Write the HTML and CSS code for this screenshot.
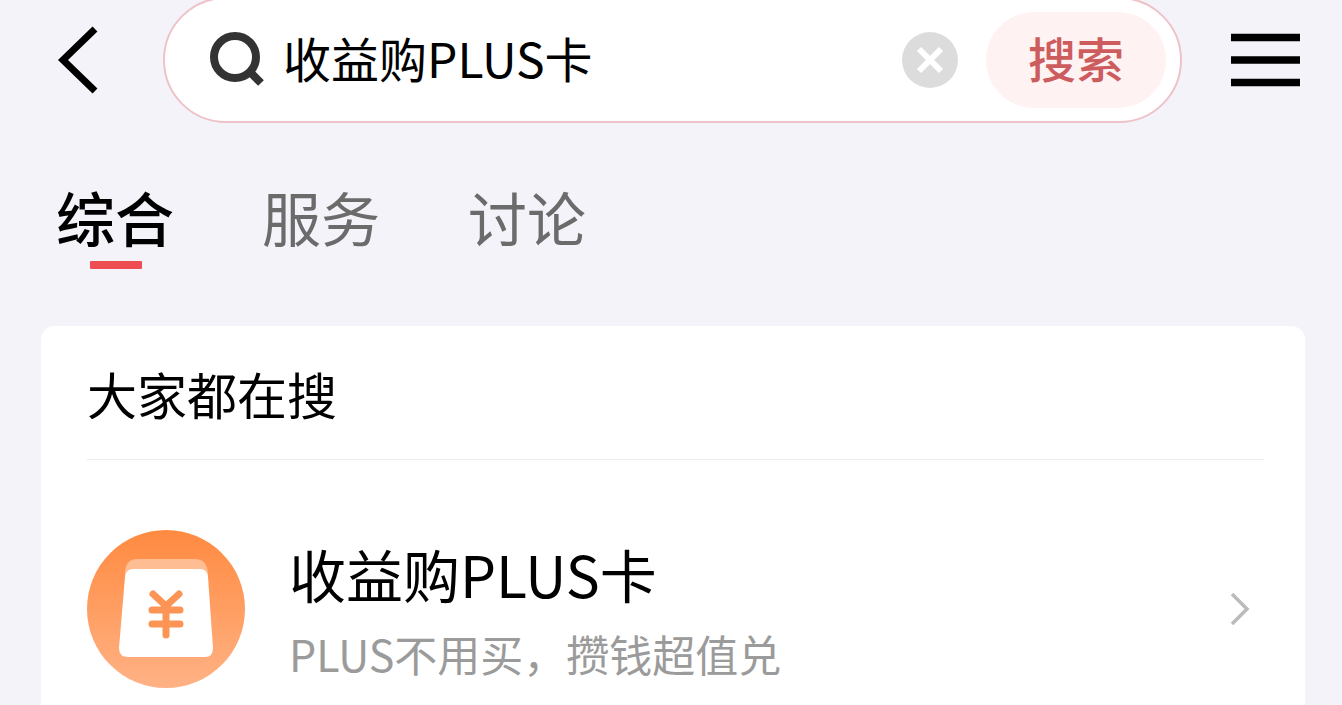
FILE: index.html
```html
<!DOCTYPE html>
<html lang="zh-CN">
<head>
    <meta charset="UTF-8">
    <meta name="viewport" content="width=device-width, initial-scale=1.0">
    <title>收益购PLUS卡</title>
    <link rel="stylesheet" href="styles.css">
</head>
<body>

    <header class="header">
        <button class="icon-btn back" type="button" aria-label="返回">
            <svg width="42" height="70" viewBox="0 0 42 70">
                <path d="M39 4 L7 35 L39 66" fill="none" stroke="#000" stroke-width="7"/>
            </svg>
        </button>
        <form class="search" role="search">
            <svg class="search-icon" width="56" height="56" viewBox="0 0 56 56" fill="none" stroke="#333">
                <circle cx="26" cy="25" r="21" stroke-width="8"/>
                <path d="M40 39 L52 51" stroke-width="8"/>
            </svg>
            <input class="search-input" type="text" value="收益购PLUS卡" aria-label="搜索内容">
            <button class="icon-btn clear" type="reset" aria-label="清空">
                <svg width="56" height="56" viewBox="0 0 56 56">
                    <circle cx="28" cy="28" r="28" fill="#dcdcdc"/>
                    <path d="M17 17 L39 39 M39 17 L17 39" stroke="#fff" stroke-width="6"/>
                </svg>
            </button>
            <button class="search-btn" type="button">搜索</button>
        </form>
        <button class="icon-btn menu" type="button" aria-label="菜单">
            <svg width="69" height="54" viewBox="0 0 69 54">
                <path d="M0 4.500 H69 M0 27 H69 M0 49.500 H69" stroke="#000" stroke-width="7.500"/>
            </svg>
        </button>
    </header>

    <nav class="tabs">
        <a class="tab active" href="#all">综合</a>
        <a class="tab" href="#service">服务</a>
        <a class="tab" href="#talk">讨论</a>
    </nav>

    <main class="card">
        <h2 class="card-title">大家都在搜</h2>
        <a class="item" href="#plus">
            <svg class="item-icon" width="158" height="158" viewBox="0 0 158 158">
                <defs>
                    <linearGradient id="orange" x1="0" y1="0" x2="0" y2="1">
                        <stop offset="0" stop-color="#ff8a40"/>
                        <stop offset="1" stop-color="#ffb285"/>
                    </linearGradient>
                </defs>
                <circle cx="79" cy="79" r="79" fill="url(#orange)"/>
                <path d="M38 54 V42 Q39 29 50 29 H108 Q119 29 121 42 V54 Z" fill="#ffbd94"/>
                <path d="M46 39 H113 Q120 39 121 47 L126 118 Q126 127 118 127 H41 Q32 127 32 118 L38 47 Q39 39 46 39 Z" fill="#fff"/>
                <path d="M66 64 L79 76 L92 64 M65 80 H93 M65 94 H93 M79 76 V105" fill="none" stroke="#fb9455" stroke-width="7" stroke-linecap="round"/>
            </svg>
            <div class="item-text">
                <div class="item-name">收益购PLUS卡</div>
                <div class="item-desc">PLUS不用买，攒钱超值兑</div>
            </div>
            <svg class="arrow" width="20" height="34" viewBox="0 0 20 34">
                <path d="M2 2 L17 17 L2 32" fill="none" stroke="#bbb" stroke-width="3.500"/>
            </svg>
        </a>
    </main>

</body>
</html>
```
FILE: styles.css
```css
* {
    box-sizing: border-box;
}
body {
    margin: 0;
    background-color: #f4f3fa;
    color: #000;
    font-family: "Noto Sans CJK SC", sans-serif;
}
a {
    color: inherit;
    text-decoration: none;
}
button,
input {
    border: none;
    padding: 0;
    background: none;
    font-family: inherit;
    color: inherit;
}
button {
    cursor: pointer;
}
svg {
    display: block;
    flex-shrink: 0;
}

/* search bar, its top edge runs just off the screen */
.header {
    display: flex;
    align-items: center;
    margin-top: -3px;
    padding: 0 42px 0 56px;
}
.search {
    display: flex;
    flex: 1;
    align-items: center;
    min-width: 0;
    height: 126px;
    margin: 0 49px 0 65px;
    padding: 0 14px 0 44px;
    background-color: #fff;
    border: 2px solid #eec3c7;
    border-radius: 63px;
}
.search-input {
    flex: 1;
    min-width: 0;
    margin: 0 18px;
    padding-bottom: 6px;
    font-size: 48px;
    line-height: 72px;
    outline: none;
}
.search-btn {
    width: 180px;
    height: 96px;
    margin-left: 28px;
    padding-bottom: 6px;
    border-radius: 48px;
    background-color: #fff2f2;
    color: #cd5c5e;
    font-size: 48px;
    font-weight: 500;
}

.tabs {
    display: flex;
    gap: 88px;
    padding: 50px 56px 0;
}
.tab {
    position: relative;
    font-size: 59px;
    line-height: 88px;
    color: #6b6b6b;
}
.tab.active {
    color: #000;
    font-weight: 500;
}
.tab.active::after {
    content: "";
    position: absolute;
    left: 50%;
    bottom: -8px;
    width: 52px;
    height: 8px;
    margin-left: -25px;
    border-radius: 1px;
    background-color: #ee4d52;
}

.card {
    margin: 65px 37px 0 41px;
    padding: 0 41px 0 46px;
    background-color: #fff;
    border-radius: 14px;
}
.card-title {
    margin: 0;
    padding: 31px 0 30px;
    border-bottom: 1px solid #ececec;
    font-size: 50px;
    font-weight: 400;
    line-height: 72px;
}
.item {
    display: flex;
    align-items: center;
    padding: 69px 14px 46px 0;
}
.item-text {
    flex: 1;
    margin-left: 44px;
}
.item-name {
    font-size: 57px;
    line-height: 88px;
}
.item-desc {
    font-size: 43px;
    line-height: 72px;
    color: #9b9b9b;
}
```
